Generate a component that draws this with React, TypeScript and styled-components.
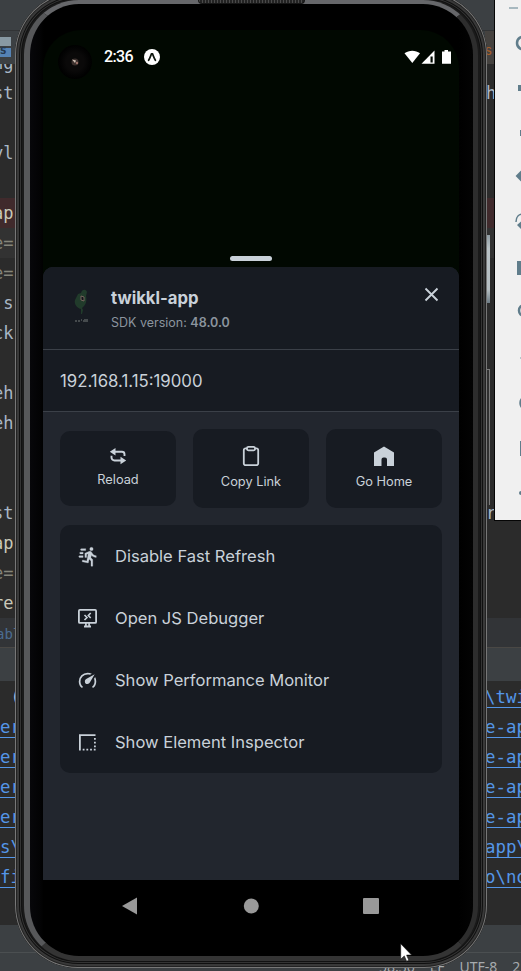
import React from "react";
import styled, { createGlobalStyle, css } from "styled-components";

const GlobalStyle = createGlobalStyle`
  * { box-sizing: border-box; }
  html, body { margin: 0; background: #2b2b2b; }
  body { overflow: hidden; }
`;

const Desktop = styled.div`
  position: relative;
  width: 521px;
  height: 971px;
  overflow: hidden;
  background: #2b2b2b;
`;

/* ---------- editor window ---------- */
const Ide = styled.div`
  display: flex;
  flex-direction: column;
  height: 971px;
  font-family: "DejaVu Sans Mono", monospace;
  font-size: 17px;
`;
const Band = styled.div<{ $h: number; $bg: string; $line?: string }>`
  flex: none;
  display: flex;
  align-items: center;
  justify-content: space-between;
  height: ${(p) => p.$h}px;
  background: ${(p) => p.$bg};
  border-bottom: ${(p) => (p.$line ? `1px solid ${p.$line}` : "none")};
  overflow: hidden;
`;
const FileTab = styled.div`
  width: 11px;
  height: 20px;
  margin-bottom: 2px;
  background: linear-gradient(#8899a3 0 9px, #3c4043 9px 11px, #5583b5 11px);
  color: #263a50;
  font: bold 9px/29px "DejaVu Sans", sans-serif;
`;
const TabTail = styled.div`
  width: 36px;
  height: 34px;
  background: #45423f;
  color: #a55f2b;
  font: 13px/38px "Inter", sans-serif;
`;
const Editor = styled.div`
  flex: none;
  height: 554px;
  overflow: hidden;
  background: #2b2b2b;
`;
const CodeLines = styled.div`
  margin-top: -16px;
`;
const CodeLine = styled.div<{ $bg?: string }>`
  display: flex;
  justify-content: space-between;
  height: 30px;
  line-height: 30px;
  white-space: pre;
  background: ${(p) => p.$bg || "transparent"};
`;
const CodeStart = styled.span<{ $c: string }>`
  margin-left: -7px;
  color: ${(p) => p.$c};
`;
const CodeEnd = styled.span`
  width: 35px;
  color: #a9b7c6;
`;
const Console = styled.div`
  flex: none;
  height: 244px;
  padding-top: 1px;
  background: #2b2b2b;
`;
const ConsoleLine = styled.div`
  display: flex;
  justify-content: space-between;
  height: 30px;
  line-height: 30px;
  font-size: 17.4px;
  white-space: pre;
  color: #5496e8;
`;
const Link = styled.span<{ $w: number; $plain?: boolean }>`
  width: ${(p) => p.$w}px;
  height: 26px;
  overflow: hidden;
  border-bottom: ${(p) => (p.$plain ? "none" : "1px solid #5496e8")};
  color: ${(p) => (p.$plain ? "#a9c0df" : "inherit")};
`;
const ToolTab = styled.span`
  color: #4b6c91;
  font-size: 14px;
  margin-left: -4px;
  padding-top: 2px;
`;
const StatusInfo = styled.div`
  display: flex;
  gap: 15px;
  margin-left: 379px;
  padding-top: 10px;
  white-space: nowrap;
  color: #a6aaad;
  font: 14px/16px "Noto Sans", sans-serif;
`;

/* ---------- emulator toolbar ---------- */
const Toolbar = styled.div`
  position: absolute;
  left: 494px;
  top: 0;
  width: 40px;
  height: 521px;
  border: solid #050505;
  border-width: 0 0 1px 1px;
  background: #f0f0f0;
`;

/* ---------- phone ---------- */
const SideButton = styled.div<{ $top: number; $h: number; $light?: boolean }>`
  position: absolute;
  left: 486px;
  top: ${(p) => p.$top}px;
  width: 4px;
  height: ${(p) => p.$h}px;
  ${(p) =>
    p.$light
      ? css`background: linear-gradient(#8f9ca3, #b9c2c6 20%, #b5bec2 80%, #6c7b84);`
      : css`background: #303030; border: solid #7b7b7b; border-width: 1px 1px 0 0;`}
`;
const Phone = styled.div`
  position: absolute;
  left: 15px;
  top: -8px;
  width: 472px;
  height: 976px;
  padding: 8px 9px 7px 9px;
  border-radius: 63px;
  background: #1a1a1a;
  box-shadow: inset 0 0 0 1px #777, inset 0 0 0 2px #222, inset 0 0 0 4px #393939,
    inset 0 0 0 5px #101010, inset 0 0 0 6px #343434, inset 0 0 0 7px #111;
`;
const Bezel = styled.div`
  height: 961px;
  padding: 26px 14px 0 13px;
  border-style: solid;
  border-width: 4px 5px 5px 6px;
  border-color: #66676a #2d2d2d #343434 #57585a;
  border-radius: 55px;
  background: linear-gradient(90deg, #07070a 0, #030304 10px, #000 14px, #000 calc(100% - 14px), #030303 100%);
`;
const Speaker = styled.div`
  position: absolute;
  left: 183px;
  top: 8px;
  width: 107px;
  height: 4px;
  border: 1px solid #161616;
  border-top: 0;
  border-radius: 0 0 5px 5px;
  background: repeating-linear-gradient(90deg, #4a4a4a 0 1px, #232323 1px 3px);
`;
const Screen = styled.div`
  display: flex;
  flex-direction: column;
  width: 416px;
  height: 901px;
  border-radius: 38px 38px 0 0;
  background: #010801;
  overflow: hidden;
  font-family: "Inter", sans-serif;
  color: #c9d1d9;
`;
const Camera = styled.div`
  position: absolute;
  left: 43px;
  top: 53px;
  width: 34px;
  height: 34px;
  border-radius: 50%;
  background: radial-gradient(circle, #0a0909 0 9px, #030303 14px, #000 17px);
`;
const StatusBar = styled.div`
  flex: none;
  display: flex;
  align-items: center;
  height: 53px;
  padding: 0 8px 0 61px;
  color: #fff;
  font: 500 16px/20px Roboto, sans-serif;
  letter-spacing: -0.6px;
`;
const ExpoBadge = styled.svg`
  margin-left: 11px;
`;
const StatusIcons = styled.svg`
  margin-left: auto;
`;
const Viewport = styled.div`
  flex: none;
  display: flex;
  justify-content: center;
  align-items: flex-end;
  height: 184px;
  padding-bottom: 6px;
`;
const Handle = styled.div`
  width: 42px;
  height: 5px;
  border-radius: 3px;
  background: #c9d1d9;
`;
const Sheet = styled.div`
  flex: none;
  height: 613px;
  border-radius: 10px 10px 0 0;
  background: #22262e;
  overflow: hidden;
`;
const Header = styled.div`
  display: flex;
  height: 83px;
  padding: 19px 20px 0 17px;
  background: #171b22;
  border-bottom: 1px solid #3b4048;
`;
const AppInfo = styled.div`
  margin-left: 9px;
  flex: 1;
`;
const AppName = styled.div`
  font-size: 16.7px;
  font-weight: 700;
  line-height: 25px;
`;
const SdkVersion = styled.div`
  margin-top: 2px;
  font-size: 12.5px;
  line-height: 20px;
  color: #8b949e;
  b { font-weight: 600; }
`;
const HostRow = styled.div`
  height: 62px;
  padding-left: 17px;
  background: #171b22;
  border-bottom: 1px solid #3b4048;
  font-size: 16.8px;
  line-height: 62px;
`;
const Actions = styled.div`
  display: flex;
  align-items: center;
  justify-content: space-between;
  padding: 17px 17px 0;
`;
const ActionButton = styled.div<{ $h: number }>`
  display: flex;
  flex-direction: column;
  align-items: center;
  width: 116px;
  height: ${(p) => p.$h}px;
  padding-top: ${(p) => (p.$h > 75 ? 16 : 15)}px;
  border-radius: 10px;
  background: #171b22;
  font-size: 12.8px;
  line-height: 18px;
  svg { margin-bottom: ${(p) => (p.$h > 75 ? 7 : 5)}px; }
`;
const Menu = styled.div`
  margin: 17px 17px 0;
  border-radius: 10px;
  background: #171b22;
`;
const MenuItem = styled.div`
  display: flex;
  align-items: center;
  gap: 17px;
  height: 62px;
  padding-left: 17px;
  font-size: 16.56px;
`;
const NavBar = styled.div`
  flex: none;
  display: flex;
  justify-content: space-between;
  align-items: center;
  height: 51px;
  padding: 0 80px 0 79px;
  background: #000;
`;
const Pointer = styled.svg`
  position: absolute;
  left: 400px;
  top: 943px;
`;

type Row = [string, string?, string?, string?];
const code: Row[] = [
  ["ng"], ["st", "#a9b7c6", undefined, "h"], [""], ["yl"], [""], ["ap", "#c9c8b8", "#402a2c"],
  ["e=", "#85857a", "#323232"], ["e=", "#85857a"], [" s"], ["ck"], [""], ["eh"], ["eh"], [""], [""],
  ["st", "#a9b7c6", undefined, "r"], ["ap", "#c9c8b8"], ["e=", "#85857a"], ["re'", "#c9c8b8"],
];
const links = [[" (", "\\twik"], ["er", "e-app"], ["er", "e-app"], ["er", "e-app"], ["er", "e-app"], ["s\\", "app\\"], ["fi", "o\\no"]];

const RunIcon = () => (
  <svg width="21" height="21" viewBox="0 0 24 24" fill="currentColor">
    <path d="M16.5,5.5A2,2 0 0,0 18.5,3.5A2,2 0 0,0 16.5,1.5A2,2 0 0,0 14.5,3.5A2,2 0 0,0 16.5,5.5M12.9,19.4L13.9,15L16,17V23H18V15.5L15.9,13.5L16.5,10.5C17.89,12.09 19.89,13 22,13V11C20.24,11.03 18.6,10.11 17.7,8.6L16.7,7C16.34,6.4 15.7,6 15,6C14.7,6 14.5,6.1 14.2,6.1L9,8.3V13H11V9.6L12.8,8.9L11.2,17L6.3,16L5.9,18L12.9,19.4M4,9A1,1 0 0,1 3,8A1,1 0 0,1 4,7H7V9H4M5,5A1,1 0 0,1 4,4A1,1 0 0,1 5,3H10V5H5M3,13A1,1 0 0,1 2,12A1,1 0 0,1 3,11H7V13H3Z" stroke="currentColor" strokeWidth=".3" />
  </svg>
);
const DebugIcon = () => (
  <svg width="21" height="21" viewBox="0 0 21 21" fill="none" stroke="currentColor">
    <rect x="1.9" y="1.9" width="17.2" height="13" rx="1" strokeWidth="1.8" />
    <path d="M8.9 15v3M12.1 15v3" strokeWidth="1.7" />
    <path d="M7 18.500h7" strokeWidth="2" />
    <path d="M7.500 7l2.500 2.500-2.500 2.500M13.700 5l-2.400 2.500 2.400 2.500" strokeWidth="1.600" />
  </svg>
);
const SpeedIcon = () => (
  <svg width="21" height="21" viewBox="0 0 24 24" fill="currentColor">
    <path d="M12,16A3,3 0 0,1 9,13C9,11.88 9.61,10.9 10.5,10.39L20.21,4.77L14.68,14.35C14.18,15.33 13.17,16 12,16M12,3C13.81,3 15.5,3.5 16.97,4.32L14.87,5.53C14,5.19 13,5 12,5A8,8 0 0,0 4,13C4,15.21 4.89,17.21 6.34,18.65H6.35C6.74,19.04 6.74,19.67 6.35,20.06C5.96,20.45 5.32,20.45 4.93,20.07V20.07C3.12,18.26 2,15.76 2,13A10,10 0 0,1 12,3M22,13C22,15.76 20.88,18.26 19.07,20.07V20.07C18.68,20.45 18.05,20.45 17.66,20.06C17.27,19.67 17.27,19.04 17.66,18.65V18.65C19.11,17.2 20,15.21 20,13C20,12 19.81,11 19.46,10.1L20.67,8C21.5,9.5 22,11.18 22,13Z" />
  </svg>
);
const InspectIcon = () => (
  <svg width="21" height="21" viewBox="0 0 21 21" fill="none" stroke="currentColor" strokeWidth="1.8">
    <path d="M2.900 18.500V3.200h15.600" />
    <path d="M5.700 17.700h13.200" strokeDasharray="1.8 1.9" />
    <path d="M17.900 6v10.500" strokeDasharray="1.8 1.9" />
  </svg>
);

const menu: [string, React.FC][] = [
  ["Disable Fast Refresh", RunIcon],
  ["Open JS Debugger", DebugIcon],
  ["Show Performance Monitor", SpeedIcon],
  ["Show Element Inspector", InspectIcon],
];

export default function App() {
  return (
    <Desktop>
      <GlobalStyle />
      <Ide>
        <Band $h={31} $bg="#3c4043" $line="#313335" />
        <Band $h={33} $bg="#3c4043"><FileTab>S</FileTab><TabTail>s</TabTail></Band>
        <Editor>
          <CodeLines>
            {code.map(([text, color, bg, end], i) => (
              <CodeLine key={i} $bg={bg}>
                <CodeStart $c={color || "#a9b7c6"}>{text}</CodeStart>
                <CodeEnd>{end}</CodeEnd>
              </CodeLine>
            ))}
          </CodeLines>
        </Editor>
        <Band $h={30} $bg="#323437" $line="#4a4845"><ToolTab>abl</ToolTab></Band>
        <Band $h={33} $bg="#3c4043" />
        <Console>
          {links.map(([l, r], i) => (
            <ConsoleLine key={i}>
              <Link $w={24} $plain={i === 0}>{l}</Link>
              <Link $w={36}>{r}</Link>
            </ConsoleLine>
          ))}
        </Console>
        <Band $h={28} $bg="#3c4043" $line="#4b4f51" />
        <Band $h={18} $bg="#3c4043">
          <StatusInfo><span>58:36</span><span>LF</span><span>UTF-8</span><span>2 spaces</span></StatusInfo>
        </Band>
      </Ide>

      <SideButton $top={235} $h={68} $light />
      <SideButton $top={369} $h={136} />
      <Toolbar>
        <svg width="26" height="520" viewBox="495 0 26 520" fill="none" stroke="#607d8b" strokeWidth="2">
          <path d="M509 8h9" stroke="#a7b8bf" />
          <path d="M526 37a6.5 6.5 0 1 0 0 12" strokeWidth="2.5" />
          <path d="M518 85h6v6h-6z" fill="#607d8b" stroke="none" />
          <path d="M520 130h3v6h-3z" fill="#607d8b" stroke="none" />
          <path d="M517 176l7-7v4l-3 3 3 5v2z" fill="#607d8b" />
          <path d="M516 222c0-5 3-8 7-8" strokeWidth="1.5" />
          <path d="M517 225l7-6v5l-3 1 3 4v3z" fill="#607d8b" stroke="none" />
          <path d="M517 261h5v14h-5z" fill="#607d8b" stroke="none" />
          <path d="M525 305c-8 0-8 11 0 11" strokeWidth="2.5" />
          <path d="M520 358h4" stroke="#b9c5ca" />
          <path d="M524 398c-5 0-5 10 0 10M521 441v14h3" />
          <circle cx="521" cy="493" r="2" fill="#607d8b" stroke="none" />
        </svg>
      </Toolbar>

      <Phone>
        <Bezel>
          <Screen>
            <StatusBar>
              2:36
              <ExpoBadge width="16" height="16" viewBox="0 0 16 16">
                <circle cx="8" cy="8" r="8" fill="#fff" />
                <path d="M4.6 11.3C6 9 6.8 6.5 7.5 4.9h1C9.2 6.5 10 9 11.4 11.3" fill="none" stroke="#101810" strokeWidth="1.7" strokeLinecap="round" />
              </ExpoBadge>
              <StatusIcons width="47" height="16" viewBox="404 48 47 16" fill="#fff">
                <path d="M404.500 52.200c4.500-3.400 11-3.400 15.500 0L412.300 62z" />
                <path d="M434.500 49.500V62.700H421.500z" />
                <path d="M430.500 55.500h2.200v6h-2.200z" fill="#010801" />
                <path d="M442 50.500h2.500V49h3.500v1.500h3V62.800h-9z" />
              </StatusIcons>
            </StatusBar>
            <Viewport><Handle /></Viewport>
            <Sheet>
              <Header>
                <svg width="42" height="42" viewBox="60 286 42 42">
                  <path d="M81 293c1-4 5-4 6-1l-1 4c1 5 0 9-4 12l1 2-1 4h-1v-5c-5-1-7-6-6-9l2-4 1-2z" fill="#213b2b" />
                  <path d="M81 296l3 1v4l-3-1z" fill="#13151a" stroke="#89716a" strokeWidth=".8" />
                  <path d="M75 321h2m1 0h2m1-1h1m1 1h1m1-2v3m2-3v3" stroke="#555b5c" strokeWidth="1.500" />
                </svg>
                <AppInfo>
                  <AppName>twikkl-app</AppName>
                  <SdkVersion>SDK version: <b>48.0.0</b></SdkVersion>
                </AppInfo>
                <svg width="15" height="17" viewBox="0 0 15 17" fill="none" stroke="currentColor" strokeWidth="1.900">
                  <path d="M1.500 2.500l12 12M13.500 2.500l-12 12" />
                </svg>
              </Header>
              <HostRow>192.168.1.15:19000</HostRow>
              <Actions>
                <ActionButton $h={75}>
                  <svg width="20" height="20" viewBox="0 0 20 20" fill="none" stroke="currentColor" strokeWidth="1.900">
                    <path d="M6 5.800h8a2.500 2.500 0 0 1 2.500 2.500v1.700M14 14.500H6.500a3 3 0 0 1-3-3V9.800" />
                    <path d="M7.500 2v7.500L1.800 5.800zM12.500 10.800v7.500l5.700-3.800z" fill="currentColor" stroke="none" />
                  </svg>
                  Reload
                </ActionButton>
                <ActionButton $h={79}>
                  <svg width="20" height="21" viewBox="0 0 20 21" fill="none" stroke="currentColor" strokeWidth="1.800">
                    <path d="M6 3.300H4.500A1.700 1.700 0 0 0 2.800 5v13.500a1.700 1.700 0 0 0 1.700 1.700h11a1.700 1.700 0 0 0 1.700-1.700V5a1.700 1.700 0 0 0-1.700-1.700H14" />
                    <rect x="6" y="1.800" width="8" height="3.500" rx="1.400" />
                  </svg>
                  Copy Link
                </ActionButton>
                <ActionButton $h={79}>
                  <svg width="20" height="21" viewBox="0 0 20 21" fill="currentColor">
                    <path d="M10 1.500L20 7.500v13.500h-7V14.500a2 2 0 0 0-2-2H9.500a2 2 0 0 0-2 2v6.500H0V7.500z" />
                  </svg>
                  Go Home
                </ActionButton>
              </Actions>
              <Menu>
                {menu.map(([label, Icon]) => (
                  <MenuItem key={label}><Icon />{label}</MenuItem>
                ))}
              </Menu>
            </Sheet>
            <NavBar>
              <svg width="16" height="18" viewBox="0 0 16 18" fill="#999"><path d="M0 9L15 .500v17z" /></svg>
              <svg width="16" height="16" viewBox="0 0 16 16" fill="#999"><circle cx="8.300" cy="8" r="7.500" /></svg>
              <svg width="16" height="16" viewBox="0 0 16 16" fill="#999"><rect width="16" height="16" rx="1" /></svg>
            </NavBar>
          </Screen>
        </Bezel>
        <Speaker />
        <Camera>
          <svg width="34" height="34" viewBox="0 0 34 34">
            <circle cx="17" cy="17" r="3.500" fill="#3b302d" />
            <path d="M14 14.500l3 3.500 1-2.500z" fill="#d3c4b8" /><circle cx="19" cy="18" r="1.200" fill="#9b7269" />
          </svg>
        </Camera>
      </Phone>
      <Pointer width="12" height="19" viewBox="0 0 12 19">
        <path d="M.7.700v15.600l3.600-3.400 2.300 5.400 2.300-1-2.300-5.200h5z" fill="#fff" stroke="#111" strokeWidth=".6" />
      </Pointer>
    </Desktop>
  );
}
